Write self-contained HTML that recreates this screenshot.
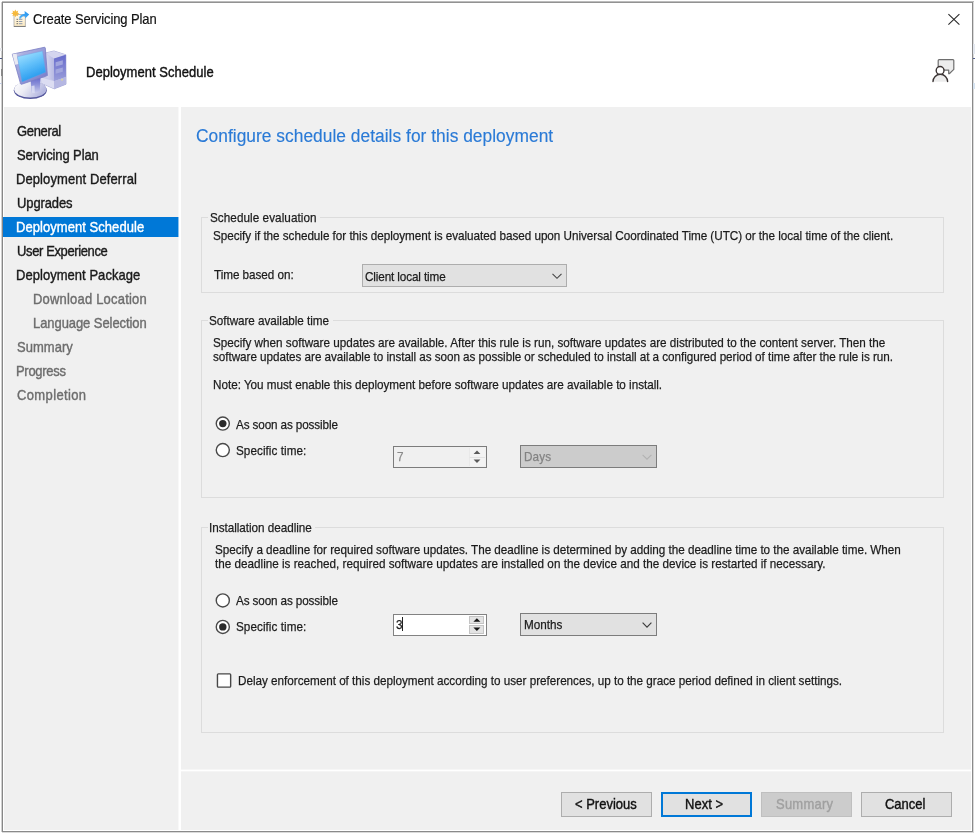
<!DOCTYPE html>
<html lang="en">
<head>
<meta charset="utf-8">
<title>Create Servicing Plan</title>
<style>
html,body{margin:0;padding:0;background:#fff;}
body{width:975px;height:835px;position:relative;overflow:hidden;font-family:"Liberation Sans",sans-serif;filter:blur(0.4px);}
.abs{position:absolute;}
#win{left:2px;top:1px;width:971px;height:831px;background:#fff;}
#bT{left:2px;top:1px;width:972px;height:1px;background:#bcbcbc;}
#bT2{left:2px;top:2px;width:971px;height:1px;background:#929292;}
#bL0{left:1px;top:2px;width:1px;height:830px;background:#d0d0d0;}
#bL{left:2px;top:2px;width:1px;height:830px;background:#878787;}
#bR{left:972px;top:2px;width:1px;height:830px;background:#8a8a8a;}
#bR2{left:973px;top:2px;width:1px;height:831px;background:#dadada;}
#bB{left:2px;top:831px;width:971px;height:1px;background:#8a8a8a;}
#bB2{left:2px;top:832px;width:972px;height:1px;background:#dadada;}
#side{left:4px;top:107px;width:175px;height:723px;background:#f0f0f0;}
#main{left:181px;top:107px;width:790px;height:723px;background:#f0f0f0;}
#hline{left:181px;top:770px;width:790px;height:1px;background:#fff;}
.t{position:absolute;white-space:nowrap;font-size:13.5px;line-height:14px;transform-origin:0 0;-webkit-text-stroke:0.25px currentColor;}
.s{position:absolute;white-space:nowrap;font-size:14.2px;line-height:16px;-webkit-text-stroke:0.4px currentColor;}
#sel{left:3px;top:217px;width:176px;height:20px;background:#0078d7;}
.gb{position:absolute;left:201px;width:741px;border:1px solid #dcdcdc;}
.gl{position:absolute;background:#f0f0f0;height:3px;}
.combo{position:absolute;box-sizing:border-box;height:23px;background:#e1e1e1;border:1px solid #adadad;}
.btn{position:absolute;top:792px;width:91px;height:25px;box-sizing:border-box;background:#e1e1e1;border:1px solid #adadad;}
.radio{position:absolute;width:14px;height:14px;box-sizing:border-box;border:1px solid #333;border-radius:50%;background:#fff;}
.radio.on::after{content:"";position:absolute;left:3px;top:3px;width:6px;height:6px;border-radius:50%;background:#222;}
</style>
</head>
<body>
<div class="abs" id="win"></div>
<div class="abs" id="bT"></div><div class="abs" id="bT2"></div>
<div class="abs" id="bL0"></div><div class="abs" id="bL"></div><div class="abs" id="bR"></div><div class="abs" id="bR2"></div>
<div class="abs" id="bB"></div><div class="abs" id="bB2"></div>
<div class="abs" id="side"></div>
<div class="abs" id="main"></div>
<div class="abs" id="hline"></div>
<div class="abs" style="left:181px;top:769px;width:790px;height:1px;background:#f6f6f6"></div><div class="abs" style="left:181px;top:771px;width:790px;height:1px;background:#f5f5f5"></div>
<div class="abs" style="left:0;top:58px;width:2px;height:1px;background:#4a5682"></div><div class="abs" style="left:1px;top:69px;width:1px;height:7px;background:#8a8a8a"></div><div class="abs" style="left:0;top:83px;width:2px;height:1px;background:#c3cde2"></div><div class="abs" style="left:0;top:48px;width:2px;height:3px;background:#e6e8ec"></div>
<div class="abs" style="left:973px;top:58px;width:2px;height:1px;background:#55608a"></div><div class="abs" style="left:973px;top:44px;width:2px;height:10px;background:#e3e7ee"></div><div class="abs" style="left:973px;top:83px;width:2px;height:6px;background:#d6e3f0"></div>
<!-- title icon -->
<svg class="abs" style="left:9px;top:8px" width="22" height="21" viewBox="9 8 22 21">
<defs>
<linearGradient id="doc" x1="0" y1="0" x2="0" y2="1"><stop offset="0" stop-color="#fffaf0"/><stop offset="1" stop-color="#fbe9bf"/></linearGradient>
<linearGradient id="arr" x1="0" y1="1" x2="1" y2="0"><stop offset="0" stop-color="#5ab4f4"/><stop offset="1" stop-color="#1e90f0"/></linearGradient>
<filter id="tb" x="-10%" y="-10%" width="120%" height="120%"><feGaussianBlur stdDeviation="0.35"/></filter>
</defs>
<g filter="url(#tb)">
<path d="M14 14.5 L22.5 14.5 L25.4 17.2 L25.4 26.4 L14 26.4 Z" fill="url(#doc)" stroke="#a9a9a9" stroke-width="0.8"/>
<path d="M13.8 26.5 L25.6 26.5" stroke="#777" stroke-width="0.9"/>
<rect x="16.6" y="18.8" width="1.2" height="1" fill="#555"/><rect x="18.8" y="18.8" width="3.6" height="1" fill="#8f9bb0"/>
<rect x="16.6" y="21" width="1.2" height="1" fill="#555"/><rect x="18.8" y="21" width="3.6" height="1" fill="#8f9bb0"/>
<rect x="16.6" y="23.2" width="1.2" height="1" fill="#555"/><rect x="18.8" y="23.2" width="3.6" height="1" fill="#8f9bb0"/>
<path d="M15.3 9.6 L16.3 11.6 L18.3 10.6 L17.5 12.6 L19.3 13.4 L17.4 14.3 L18.2 16.3 L16.3 15.4 L15.3 17.2 L14.4 15.3 L12.4 16.2 L13.2 14.2 L11.2 13.3 L13.2 12.5 L12.4 10.5 L14.4 11.5 Z" fill="#f6b93b"/>
<path d="M19 18.6 Q19.6 14.2 24.8 13.8 L24.6 10.9 L29.2 14.6 L25.2 18.4 L25 15.9 Q21.6 16 20.4 18.7 Z" fill="url(#arr)"/>
</g>
</svg>
<svg class="abs" style="left:946px;top:12px" width="16" height="16" viewBox="0 0 16 16"><path d="M2.4 2.1 L13.4 12.7 M13.4 2.1 L2.4 12.7" stroke="#2b2b2b" stroke-width="1.1" fill="none"/></svg>
<!-- header computer icon -->
<svg class="abs" style="left:8px;top:42px" width="66" height="60" viewBox="8 42 66 60">
<defs>
<linearGradient id="scr" x1="0.2" y1="0" x2="0.6" y2="1"><stop offset="0" stop-color="#a5e3ff"/><stop offset="0.45" stop-color="#62c0fa"/><stop offset="1" stop-color="#1b93ec"/></linearGradient>
<linearGradient id="bez" x1="0" y1="0" x2="1" y2="1"><stop offset="0" stop-color="#e4e4ee"/><stop offset="0.25" stop-color="#a9addf"/><stop offset="1" stop-color="#7478c8"/></linearGradient>
<linearGradient id="base" x1="0" y1="0" x2="1" y2="0.4"><stop offset="0" stop-color="#ffffff"/><stop offset="0.45" stop-color="#ececf4"/><stop offset="1" stop-color="#b4b7e0"/></linearGradient>
<linearGradient id="twl" x1="0" y1="0" x2="1" y2="0"><stop offset="0" stop-color="#d9daf1"/><stop offset="1" stop-color="#b7b9e3"/></linearGradient>
<linearGradient id="twr" x1="0" y1="0" x2="0" y2="1"><stop offset="0" stop-color="#666acb"/><stop offset="1" stop-color="#9a9eda"/></linearGradient>
<linearGradient id="neck" x1="0" y1="0" x2="0" y2="1"><stop offset="0" stop-color="#5f64cb"/><stop offset="0.5" stop-color="#8e93da"/><stop offset="1" stop-color="#c9ccec"/></linearGradient>
<filter id="sb" x="-10%" y="-10%" width="120%" height="120%"><feGaussianBlur stdDeviation="0.45"/></filter>
</defs>
<g filter="url(#sb)">
<!-- tower -->
<path d="M45.4 53 L54 51 L65.8 54.8 L66 84.2 L54.2 88.8 L41.2 83 L41 77.5 L45.4 76.5 Z" fill="#c9cbea" stroke="#8083c2" stroke-width="0.6"/>
<path d="M45.4 53 L54 51 L65.8 54.8 L54 58.6 Z" fill="#d4d5ef"/>
<path d="M45.4 53.4 L54 58.6 L54 81 L45.4 76.5 Z" fill="url(#twl)"/>
<path d="M54 58.6 L65.8 54.8 L66 77 L54 81.2 Z" fill="url(#twr)"/>
<path d="M55.6 62.3 L62.8 60.2 L62.8 64.5 L55.6 66.6 Z" fill="#a2a6de"/>
<path d="M55.6 69.5 L62.8 67.4 L62.8 71.7 L55.6 73.8 Z" fill="#a2a6de"/>
<path d="M41 77.6 L54 81.2 L54.2 88.8 L41.2 83 Z" fill="#dcddf2"/>
<path d="M54 81.2 L66 76.8 L66 84.2 L54.2 88.8 Z" fill="#b5b7e2"/>
<rect x="61.2" y="78.8" width="1.8" height="1.8" fill="#d8d3a0"/>
<!-- base -->
<ellipse cx="30.3" cy="90.2" rx="16.5" ry="8.9" fill="#54579c"/>
<ellipse cx="30.3" cy="89.3" rx="16.1" ry="8.3" fill="url(#base)"/>
<!-- neck -->
<path d="M30.6 79.5 L40.6 76.6 L39.8 91.5 Q35.5 94 31.5 92.5 Z" fill="url(#neck)"/>
<path d="M31.5 86 L34.5 85.5 L34.8 93 L32 92.8 Z" fill="#dfe1f4" opacity="0.8"/>
<!-- monitor -->
<path d="M12.3 54.2 L44.3 47.3 Q45.2 47.2 45.3 48 L47.4 75.6 L21.5 84.3 Q20.7 84.4 20.5 83.6 Z" fill="url(#bez)" stroke="#7a7ec4" stroke-width="0.8"/>
<path d="M12.5 54.3 L16.5 53.4 L18.6 64 L15 64.8 Z" fill="#f0f0f4" opacity="0.9"/>
<path d="M17.4 56.7 L42.5 51 L45.8 72.2 L22 81.9 Z" fill="url(#scr)" stroke="#6f9fe0" stroke-width="0.4"/>
</g>
</svg>
<!-- feedback icon -->
<svg class="abs" style="left:928px;top:55px" width="32" height="32" viewBox="928 55 32 32">
<path d="M938.2 66.5 L938.2 60.6 Q938.2 59.7 939.1 59.7 L952.9 59.7 Q953.8 59.7 953.8 60.6 L953.8 69.4 L949.3 73.7 L948.7 73.7 L948.7 70.2 L945 70.2 Z" fill="#ececec" stroke="#6e6e6e" stroke-width="1.2" stroke-linejoin="round"/>
<path d="M933 81.8 A7.3 7.3 0 0 1 947.6 81.8 Z" fill="#ececec" stroke="none"/>
<path d="M933 81.6 A7.3 7.3 0 0 1 947.6 81.6" fill="none" stroke="#3a3333" stroke-width="1.4" stroke-linecap="round"/>
<circle cx="940.1" cy="70.4" r="3.9" fill="#fff" stroke="#3a3333" stroke-width="1.4"/>
</svg>
<div class="abs" id="sel"></div>
<div class="abs" style="left:178px;top:107px;width:1px;height:723px;background:rgba(255,255,255,0.55)"></div>
<div class="gb" style="top:217px;height:74px"></div>
<div class="gl" style="left:208px;top:216px;width:112px"></div>
<div class="gb" style="top:320px;height:176px"></div>
<div class="gl" style="left:208px;top:319px;width:125px"></div>
<div class="gb" style="top:527px;height:204px"></div>
<div class="gl" style="left:208px;top:526px;width:107px"></div>
<div class="combo" style="left:362px;top:264px;width:205px"></div>
<svg class="abs" style="left:551px;top:271px" width="12" height="10" viewBox="0 0 12 10"><path d="M1.5 2.8 L6 7.3 L10.5 2.8" stroke="#444" stroke-width="1.1" fill="none"/></svg>
<svg class="abs" style="left:212px;top:413px" width="20" height="20" viewBox="0 0 20 20"><circle cx="10.8" cy="10.6" r="6.55" fill="#fff" stroke="#4a4a4a" stroke-width="1.4"/><circle cx="10.8" cy="10.6" r="3.7" fill="#2b2b2b"/></svg>
<svg class="abs" style="left:212px;top:440px" width="20" height="20" viewBox="0 0 20 20"><circle cx="10.8" cy="10.1" r="6.55" fill="#fff" stroke="#4a4a4a" stroke-width="1.4"/></svg>
<div class="abs" style="left:393px;top:446px;width:94px;height:22px;box-sizing:border-box;border:1px solid #7c7c7c;background:#f0f0f0"></div>
<div class="combo" style="left:520px;top:445px;width:137px;background:#ccc;border-color:#7c7c7c"></div>
<svg class="abs" style="left:212px;top:590px" width="20" height="20" viewBox="0 0 20 20"><circle cx="10.8" cy="10.4" r="6.55" fill="#fff" stroke="#4a4a4a" stroke-width="1.4"/></svg>
<svg class="abs" style="left:212px;top:616px" width="20" height="20" viewBox="0 0 20 20"><circle cx="10.8" cy="10.9" r="6.55" fill="#fff" stroke="#4a4a4a" stroke-width="1.4"/><circle cx="10.8" cy="10.9" r="3.7" fill="#2b2b2b"/></svg>
<div class="abs" style="left:393px;top:614px;width:94px;height:22px;box-sizing:border-box;border:1px solid #828282;background:#fff"></div>
<div class="combo" style="left:520px;top:613px;width:137px;border-color:#7c7c7c"></div>
<svg class="abs" style="left:641px;top:452px" width="12" height="10" viewBox="0 0 12 10"><path d="M1.6 2.8 L6 7.2 L10.4 2.8" stroke="#b2b2b2" stroke-width="1.1" fill="none"/></svg>
<svg class="abs" style="left:641px;top:620px" width="12" height="10" viewBox="0 0 12 10"><path d="M1.6 2.6 L6 7.2 L10.4 2.6" stroke="#3c3c3c" stroke-width="1.15" fill="none"/></svg>
<div class="abs" style="left:469px;top:448px;width:15px;height:9px;background:#f3f3f3;border-bottom:1px solid #e2e2e2;border-left:1px solid #e9e9e9"></div><div class="abs" style="left:469px;top:458px;width:15px;height:8px;background:#f3f3f3;border-left:1px solid #e9e9e9"></div>
<svg class="abs" style="left:469px;top:448px" width="16" height="18" viewBox="0 0 16 18"><path d="M4.6 6 L8 2.6 L11.4 6 Z" fill="#5a5a5a"/><path d="M4.6 11.6 L8 15 L11.4 11.6 Z" fill="#5a5a5a"/></svg>
<div class="abs" style="left:469px;top:616px;width:15px;height:8px;box-sizing:border-box;background:#e3e3e3;border:1px solid #c4c4c4"></div><div class="abs" style="left:469px;top:625px;width:15px;height:9px;box-sizing:border-box;background:#e3e3e3;border:1px solid #c4c4c4"></div>
<svg class="abs" style="left:469px;top:616px" width="16" height="18" viewBox="0 0 16 18"><path d="M4.4 5.8 L7.9 2.2 L11.4 5.8 Z" fill="#151515"/><path d="M4.4 11.4 L7.9 15 L11.4 11.4 Z" fill="#151515"/></svg>
<div class="abs" style="left:402px;top:617px;width:1px;height:14px;background:#222"></div>
<svg class="abs" style="left:212px;top:668px" width="24" height="24" viewBox="212 668 24 24"><rect x="217.45" y="673.85" width="13.2" height="13.3" rx="0.9" fill="#fff" stroke="#474747" stroke-width="1.4"/></svg>
<div class="btn" style="left:561px"></div>
<div class="btn" style="left:661px;border:2px solid #0078d7"></div>
<div class="btn" style="left:761px;background:#ccc;border-color:#bfbfbf"></div>
<div class="btn" style="left:861px"></div>
<div class="t" id="g1label" style="left:209.93px;top:211px;letter-spacing:0.069px;transform:scaleX(0.8670);color:#1b1b1b">Schedule evaluation</div>
<div class="t" id="l1" style="left:213.05px;top:229px;letter-spacing:-0.036px;transform:scaleX(0.8670);color:#1b1b1b">Specify if the schedule for this deployment is evaluated based upon Universal Coordinated Time (UTC) or the local time of the client.</div>
<div class="t" id="timebased" style="left:213.63px;top:268px;letter-spacing:-0.054px;transform:scaleX(0.8670);color:#1b1b1b">Time based on:</div>
<div class="t" id="client" style="left:364.64px;top:270px;letter-spacing:-0.136px;transform:scaleX(0.8670);color:#1b1b1b">Client local time</div>
<div class="t" id="g2label" style="left:209.04px;top:314px;letter-spacing:-0.052px;transform:scaleX(0.8670);color:#1b1b1b">Software available time</div>
<div class="t" id="l2a" style="left:212.71px;top:336px;letter-spacing:-0.007px;transform:scaleX(0.8670);color:#1b1b1b">Specify when software updates are available. After this rule is run, software updates are distributed to the content server. Then the</div>
<div class="t" id="l2b" style="left:212.94px;top:350px;letter-spacing:-0.054px;transform:scaleX(0.8670);color:#1b1b1b">software updates are available to install as soon as possible or scheduled to install at a configured period of time after the rule is run.</div>
<div class="t" id="note" style="left:212.72px;top:378px;letter-spacing:-0.024px;transform:scaleX(0.8670);color:#1b1b1b">Note: You must enable this deployment before software updates are available to install.</div>
<div class="t" id="r1" style="left:236.37px;top:418px;letter-spacing:-0.138px;transform:scaleX(0.8670);color:#1b1b1b">As soon as possible</div>
<div class="t" id="r2" style="left:235.90px;top:444px;letter-spacing:0.058px;transform:scaleX(0.8670);color:#1b1b1b">Specific time:</div>
<div class="t" id="g3label" style="left:209.26px;top:521px;letter-spacing:-0.041px;transform:scaleX(0.8670);color:#1b1b1b">Installation deadline</div>
<div class="t" id="l3a" style="left:214.74px;top:543px;letter-spacing:-0.032px;transform:scaleX(0.8670);color:#1b1b1b">Specify a deadline for required software updates. The deadline is determined by adding the deadline time to the available time. When</div>
<div class="t" id="l3b" style="left:214.66px;top:557px;letter-spacing:-0.002px;transform:scaleX(0.8670);color:#1b1b1b">the deadline is reached, required software updates are installed on the device and the device is restarted if necessary.</div>
<div class="t" id="r3" style="left:236.37px;top:594px;letter-spacing:-0.138px;transform:scaleX(0.8670);color:#1b1b1b">As soon as possible</div>
<div class="t" id="r4" style="left:235.90px;top:620px;letter-spacing:0.058px;transform:scaleX(0.8670);color:#1b1b1b">Specific time:</div>
<div class="t" id="delay" style="left:237.58px;top:674px;letter-spacing:-0.023px;transform:scaleX(0.8670);color:#1b1b1b">Delay enforcement of this deployment according to user preferences, up to the grace period defined in client settings.</div>
<div class="t" id="seven" style="left:397.20px;top:450px;letter-spacing:0.000px;transform:scaleX(0.8670);color:#8a8a8a">7</div>
<div class="t" id="days" style="left:523.77px;top:450px;letter-spacing:0.176px;transform:scaleX(0.8670);color:#838383">Days</div>
<div class="t" id="three" style="left:396.20px;top:618px;letter-spacing:0.000px;transform:scaleX(0.8670);color:#1b1b1b">3</div>
<div class="t" id="months" style="left:523.95px;top:618px;letter-spacing:0.015px;transform:scaleX(0.8670);color:#1b1b1b">Months</div>
<div class="s" id="title" style="left:32.71px;top:11px;letter-spacing:-0.102px;transform-origin:0 0;transform:scaleX(0.9150);-webkit-text-stroke:0.2px currentColor;color:#111">Create Servicing Plan</div>
<div class="s" id="hdr" style="left:86.15px;top:64px;letter-spacing:0.037px;transform-origin:0 0;transform:scaleX(0.9150);color:#111">Deployment Schedule</div>
<div class="s" id="n0" style="left:17.24px;top:123px;letter-spacing:-0.355px;transform-origin:0 0;transform:scaleX(0.9150);color:#1a1a1a">General</div>
<div class="s" id="n1" style="left:16.73px;top:147px;letter-spacing:-0.098px;transform-origin:0 0;transform:scaleX(0.9150);color:#1a1a1a">Servicing Plan</div>
<div class="s" id="n2" style="left:16.44px;top:171px;letter-spacing:0.109px;transform-origin:0 0;transform:scaleX(0.9150);color:#1a1a1a">Deployment Deferral</div>
<div class="s" id="n3" style="left:16.60px;top:195px;letter-spacing:-0.116px;transform-origin:0 0;transform:scaleX(0.9150);color:#1a1a1a">Upgrades</div>
<div class="s" id="n4" style="left:16.28px;top:219px;letter-spacing:0.068px;transform-origin:0 0;transform:scaleX(0.9150);color:#ffffff">Deployment Schedule</div>
<div class="s" id="n5" style="left:16.70px;top:243px;letter-spacing:-0.403px;transform-origin:0 0;transform:scaleX(0.9150);color:#1a1a1a">User Experience</div>
<div class="s" id="n6" style="left:16.09px;top:267px;letter-spacing:0.053px;transform-origin:0 0;transform:scaleX(0.9150);color:#1a1a1a">Deployment Package</div>
<div class="s" id="n7" style="left:33.03px;top:291px;letter-spacing:0.222px;transform-origin:0 0;transform:scaleX(0.9150);color:#6d6d6d">Download Location</div>
<div class="s" id="n8" style="left:32.88px;top:315px;letter-spacing:-0.066px;transform-origin:0 0;transform:scaleX(0.9150);color:#6d6d6d">Language Selection</div>
<div class="s" id="n9" style="left:17.45px;top:339px;letter-spacing:0.039px;transform-origin:0 0;transform:scaleX(0.9150);color:#6d6d6d">Summary</div>
<div class="s" id="n10" style="left:16.20px;top:363px;letter-spacing:-0.312px;transform-origin:0 0;transform:scaleX(0.9150);color:#6d6d6d">Progress</div>
<div class="s" id="n11" style="left:17.19px;top:387px;letter-spacing:0.410px;transform-origin:0 0;transform:scaleX(0.9150);color:#6d6d6d">Completion</div>
<div class="s" id="bprev" style="left:575.30px;top:796px;letter-spacing:0.000px;transform-origin:0 0;transform:scaleX(0.9150);color:#111">&lt; Previous</div>
<div class="s" id="bnext" style="left:685.15px;top:796px;letter-spacing:0.033px;transform-origin:0 0;transform:scaleX(0.9150);color:#111">Next &gt;</div>
<div class="s" id="bsum" style="left:775.94px;top:796px;letter-spacing:0.271px;transform-origin:0 0;transform:scaleX(0.9150);color:#a0a0a0">Summary</div>
<div class="s" id="bcancel" style="left:885.14px;top:796px;letter-spacing:-0.032px;transform-origin:0 0;transform:scaleX(0.9150);color:#111">Cancel</div>
<div class="s" id="heading" style="left:196.32px;top:126px;letter-spacing:0.028px;font-size:18.00px;line-height:20px;-webkit-text-stroke:0.15px currentColor;transform-origin:0 0;transform:scaleX(0.9640);color:#2a7ad6">Configure schedule details for this deployment</div>
</body>
</html>
